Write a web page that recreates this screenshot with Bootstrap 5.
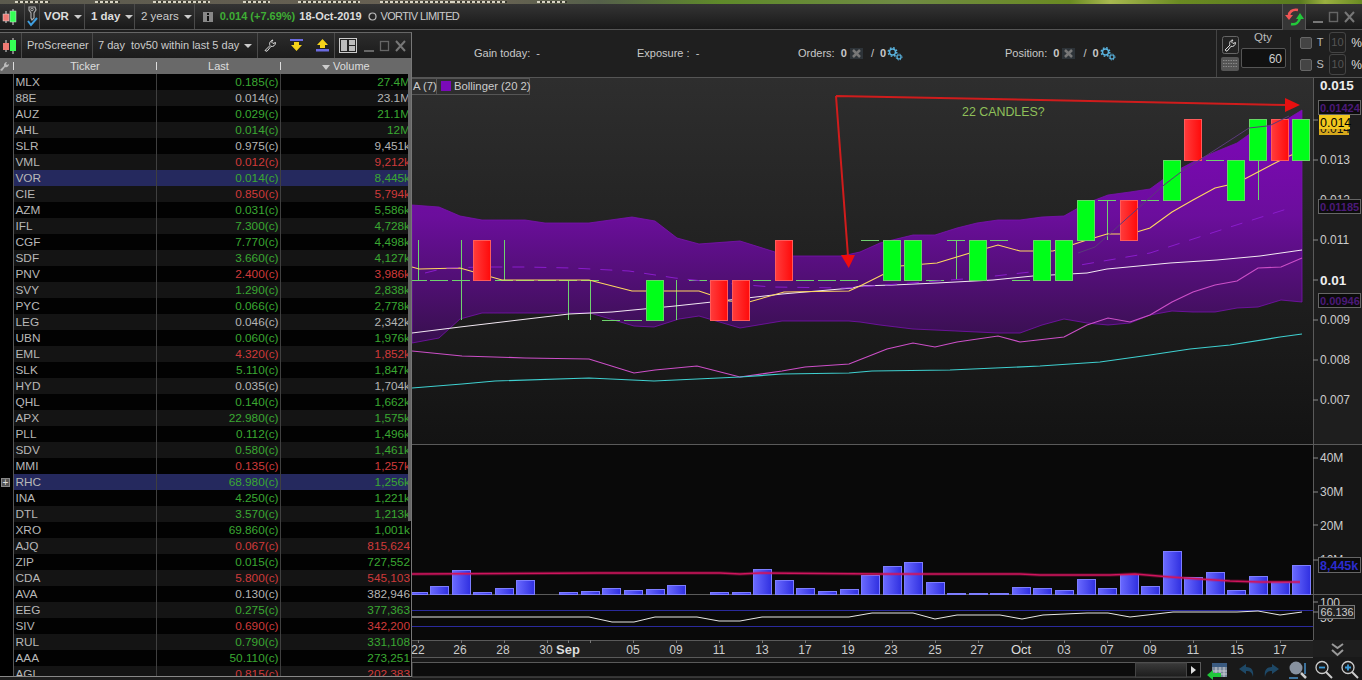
<!DOCTYPE html>
<html lang="en">
<head>
<meta charset="utf-8">
<title>ProRealTime</title>
<link href="https://cdn.jsdelivr.net/npm/bootstrap@5.3.0/dist/css/bootstrap.min.css" rel="stylesheet">
<style>
html,body{height:680px;overflow:hidden;background:#1e1e1e;color:#ccc;font-family:"Liberation Sans",Arial,sans-serif;font-size:11px;line-height:1}
.shell{width:1362px;height:680px}
.topstrip{height:4px;padding-top:1px;background:linear-gradient(90deg,#5b5a4e 0,#6a6254 480px,#55604a 600px,#5f8a2a 720px,#6f8a44 900px,#6a8a22 1070px,#a8b850 1110px,#6a8a22 1180px,#5a7a20 1300px,#9ab040 1325px,#6a8a22 1362px)}
.tfrag{display:block;height:2px;background:repeating-linear-gradient(90deg,#d8d4c4 0 3px,#3a3a30 3px 5px)}
.tf1{width:35px;margin-left:15px}.tf2{width:25px;margin-left:45px}.tf3{width:57px;margin-left:33px}.tf4{width:27px;margin-left:33px}.tf5{width:62px;margin-left:28px}.tf6{width:75px;margin-left:20px}.tf7{width:55px;margin-left:-3px}.tf8{width:30px;margin-left:30px}
.mainbar{height:26px;background:linear-gradient(#343434,#191919);border-bottom:1px solid #555}
.cell{height:25px;border-right:1px solid #4a4a4a;white-space:nowrap}
.mainbar b{color:#ddd;font-size:11.500px}
.c-ico{width:25px;padding-left:1px}.c-anc{width:15px}.c-vor{width:45px;padding-left:4px}.c-day{width:50px;padding-left:6px}.c-yr{width:60px;padding-left:6px;font-size:11.500px}
.caret-d{width:0;height:0;border-left:4px solid transparent;border-right:4px solid transparent;border-top:4px solid #ccc;display:inline-block;margin-left:5px}
.quote{gap:4px;padding-left:8px}
.ptxt{color:#3fae35;font-weight:700;font-size:11px}
.dtxt{color:#ddd;font-weight:700;font-size:11px}
.ntxt{font-size:11px;color:#ccc;letter-spacing:-.6px;margin-left:-1px}
.tab-refresh{width:24px;height:26px;background:#363636;border-left:1px solid #555;border-right:1px solid #555}
.winbtns{width:56px}
.sidepane{width:412px;margin-top:2px;height:645px;background:#000;border-right:1px solid #777;border-top:1px solid #666;border-bottom:1px solid #888}
.sc-title{height:25px;background:linear-gradient(#2c2c2c,#1b1b1b)}
.sc-title .cell{color:#ccc;font-size:11px}
.t-ico{width:22px;padding-left:1px}.t-name{width:71px;padding-left:5px}.t-sel{width:165px;padding-left:5px}.t-tools{width:77px;padding-left:6px;gap:13px}.t-win{gap:6px;padding-left:4px}
.sc-head{height:16px;background:#696969;color:#ddd;font-size:11px}
.hsep{border-left:1px solid #ddd;height:8px}
.hc0{width:3px}.hc1{width:142px}.hc2{width:123px}.hc3{width:130px;padding-left:41px}
.sortd{display:inline-block;border-left:4px solid transparent;border-right:4px solid transparent;border-top:5px solid #ccc;margin-right:3px}
.rowsbox{height:602px;overflow:hidden;position:relative}
.ctable{width:410px;table-layout:fixed;border-collapse:collapse;font-size:11.800px;color:#ccc}
.ctable td{height:16px;padding:0;white-space:nowrap;overflow:hidden;border-right:1px solid #3f3f3f;line-height:16px}
.ctable tr:nth-child(even){background:#141414}
.ctable tr:nth-child(odd){background:#020202}
.ctable tr.sel{background:#25295e}
.ctable td.g0{width:13px;border-right:1px solid #555;background:#000}
.ctable td.c1{width:143px;padding-left:2px;color:#b8b8b8}
.ctable td.c2{width:124px;text-align:right;padding-right:1px}
.ctable td.c3{text-align:right;border-right:0}
.up{color:#3aa832}.dn{color:#cf3a3a}
.ctable td.fl{color:#b4b4b4}
.scrollthumb{position:absolute;right:0;top:0;width:3px;height:447px;background:#666}
.plus{display:inline-block;width:9px;height:9px;margin:3px 1px;background:#555;color:#ddd;font-size:10px;line-height:8px;text-align:center;border:1px solid #888}
.infobar{height:48px;background:#1f1f1f;border-bottom:1px solid #555}
.infotxt{color:#c8c8c8;font-size:11px;white-space:nowrap}
.it1{width:225px;padding-left:62px}.it2{width:161px}.it3{width:207px}.it4{width:211px}
.xb{margin:0 8px 0 3px}.gr{margin-left:1px}.sl{margin-right:3px}
.tradebox{width:146px;height:47px;border-left:1px solid #444;padding-left:3px}
.toolcol{width:24px;gap:3px}
.qtycol{width:50px;text-align:center;align-self:flex-start;padding-top:2px}
.qlab{color:#bbb;font-size:11.500px}
.qtyinp{width:45px;height:20px;background:#111;border:1px solid #555;border-radius:2px;color:#ccc;text-align:right;padding:4px 3px;font-size:12px;margin:4px 0 0 1px}
.pctcol{width:72px;border-left:1px solid #444;height:33px;padding-left:9px;gap:1px;margin-left:4px}
.pctrow{height:22px;gap:5px;color:#bbb}
.chk{width:12px;height:12px;background:#444;border:1px solid #666;border-radius:2px}
.pbox{width:18px;height:21px;border:1px solid #444;border-radius:3px;color:#555;text-align:center;line-height:19px}
.pct{font-size:12px;color:#ddd}
.mainpane{min-width:0}
.bodyrow{min-height:0}
.chartwrap{width:950px;height:602px;display:block}
svg text{font-family:"Liberation Sans",Arial,sans-serif}
.ax{fill:#ccc;font-size:12px}
.axb{fill:#eee;font-size:13.500px;font-weight:700}
.dt{fill:#ccc;font-size:12px}
.dtb{fill:#ddd;font-size:13px;font-weight:700}
.dto{fill:#ddd;font-size:13px}
</style>
</head>
<body>
<div class="shell d-flex flex-column">
  <div class="topstrip d-flex"><i class="tfrag tf1"></i><i class="tfrag tf2"></i><i class="tfrag tf3"></i><i class="tfrag tf4"></i><i class="tfrag tf5"></i><i class="tfrag tf6"></i><i class="tfrag tf7"></i><i class="tfrag tf8"></i></div>
  <div class="mainbar d-flex align-items-stretch">
    <div class="cell c-ico d-flex align-items-center">
      <svg width="16" height="18" viewBox="0 0 16 18"><path d="M5 3v12M12 1v16" stroke="#ddd"/><rect x="2" y="6" width="6" height="7" fill="#ef7a74" stroke="#ddd" stroke-width=".5"/><rect x="9" y="3" width="6" height="11" fill="#35ff55" stroke="#ddd" stroke-width=".5"/></svg>
    </div>
    <div class="cell c-anc d-flex align-items-center justify-content-center">
      <svg width="13" height="21" viewBox="0 0 13 21"><path d="M3 1h6l1 3-2 3v5l-2 2-1-2V7L3 4z" fill="none" stroke="#aaa" stroke-width="1.200"/><circle cx="6" cy="3.500" r="1.300" fill="none" stroke="#aaa"/><path d="M2 15l3 4 6-7" fill="none" stroke="#3f9fe0" stroke-width="2"/></svg>
    </div>
    <div class="cell c-vor d-flex align-items-center"><b>VOR</b><span class="caret-d"></span></div>
    <div class="cell c-day d-flex align-items-center"><b>1 day</b><span class="caret-d"></span></div>
    <div class="cell c-yr d-flex align-items-center">2 years<span class="caret-d"></span></div>
    <div class="quote d-flex align-items-center flex-grow-1">
      <svg width="10" height="10" viewBox="0 0 10 10"><rect width="10" height="10" fill="#888"/><rect x="4" y="1" width="2" height="2" fill="#111"/><rect x="4" y="4" width="2" height="5" fill="#111"/></svg>
      <span class="ptxt ms-1">0.014 (+7.69%)</span><span class="dtxt">18-Oct-2019</span>
      <svg width="9" height="9" class="ms-1" viewBox="0 0 9 9"><circle cx="4.500" cy="4.500" r="3.500" fill="none" stroke="#bbb" stroke-width="1.200"/></svg>
      <span class="ntxt">VORTIV LIMITED</span>
    </div>
    <div class="tab-refresh d-flex align-items-center justify-content-center">
      <svg width="20" height="20" viewBox="0 0 20 20"><path d="M14 3C8 2 5 5 5 9" fill="none" stroke="#f05555" stroke-width="2.600"/><path d="M1 8h8l-4 5z" fill="#f05555"/><path d="M7 17c5 1 8-2 9-6" fill="none" stroke="#22c83a" stroke-width="2.600"/><path d="M12 12h8l-4-6z" fill="#22c83a"/></svg>
    </div>
    <div class="winbtns d-flex align-items-center justify-content-center">
      <svg width="44" height="12" viewBox="0 0 44 12"><path d="M1 11h10" stroke="#777" stroke-width="2"/><rect x="17.500" y="1.500" width="8" height="9" fill="none" stroke="#666" stroke-width="1.400"/><path d="M33 1l9 10M42 1l-9 10" stroke="#777" stroke-width="2"/></svg>
    </div>
  </div>
  <div class="bodyrow d-flex flex-grow-1">
    <div class="sidepane flex-shrink-0">
      <div class="sc-title d-flex align-items-stretch">
        <div class="cell t-ico d-flex align-items-center"><svg width="16" height="18" viewBox="0 0 16 18"><path d="M5 3v12M12 1v16" stroke="#ddd"/><rect x="2" y="6" width="6" height="7" fill="#ef7a74"/><rect x="9" y="3" width="6" height="11" fill="#35ff55"/></svg></div>
        <div class="cell t-name d-flex align-items-center">ProScreener</div>
        <div class="cell t-sel d-flex align-items-center">7 day&nbsp; tov50 within last 5 day<span class="caret-d"></span></div>
        <div class="cell t-tools d-flex align-items-center">
          <svg width="13" height="13" viewBox="0 0 13 13"><path d="M1 11.500l5-5c-1-2 0-5 3-5.500l-1.500 2 1.500 1.500 2.500-1c0 3-2.500 4.500-4.500 3.800l-4 5z" fill="none" stroke="#ddd"/></svg>
          <svg width="13" height="13" viewBox="0 0 13 13"><rect y="0" width="13" height="2" fill="#6a6ae0"/><path d="M4 3h5v3h3l-5.500 6L1 6h3z" fill="#f5d21a"/></svg>
          <svg width="13" height="13" viewBox="0 0 13 13"><path d="M4 9h5V6h3L6.500 0 1 6h3z" fill="#f5d21a"/><rect y="10" width="13" height="2.500" fill="#6a6ae0"/></svg>
        </div>
        <div class="t-win d-flex align-items-center">
          <svg width="18" height="15" viewBox="0 0 18 15"><rect x=".5" y=".5" width="17" height="14" fill="#222" stroke="#ccc"/><rect x="2" y="2" width="6" height="11" fill="#bbb"/><rect x="10" y="2" width="6" height="5" fill="#bbb"/><rect x="10" y="8" width="6" height="5" fill="#bbb"/></svg>
          <svg width="44" height="12" viewBox="0 0 44 12"><path d="M1 11h10" stroke="#666" stroke-width="2"/><rect x="17.500" y="1.500" width="8" height="9" fill="none" stroke="#666" stroke-width="1.300"/><path d="M33 1l9 10M42 1l-9 10" stroke="#777" stroke-width="2"/></svg>
        </div>
      </div>
      <div class="sc-head d-flex align-items-center">
        <svg width="10" height="11" viewBox="0 0 10 11"><path d="M0 9l4-4c-.5-2 1-4 3-4L6 3l1 1 2-1c0 2-2 4-4 3l-3 4z" fill="#bbb"/></svg>
        <span class="hc0"></span><span class="hsep"></span>
        <span class="hc1 text-center">Ticker</span><span class="hsep"></span>
        <span class="hc2 text-center">Last</span><span class="hsep"></span>
        <span class="hc3"><span class="sortd"></span>Volume</span>
      </div>
      <div class="rowsbox">
        <table class="ctable"><tbody>
<tr><td class="g0"></td><td class="c1">MLX</td><td class="c2 up">0.185(c)</td><td class="c3 up">27.4M</td></tr>
<tr><td class="g0"></td><td class="c1">88E</td><td class="c2 fl">0.014(c)</td><td class="c3 fl">23.1M</td></tr>
<tr><td class="g0"></td><td class="c1">AUZ</td><td class="c2 up">0.029(c)</td><td class="c3 up">21.1M</td></tr>
<tr><td class="g0"></td><td class="c1">AHL</td><td class="c2 up">0.014(c)</td><td class="c3 up">12M</td></tr>
<tr><td class="g0"></td><td class="c1">SLR</td><td class="c2 fl">0.975(c)</td><td class="c3 fl">9,451k</td></tr>
<tr><td class="g0"></td><td class="c1">VML</td><td class="c2 dn">0.012(c)</td><td class="c3 dn">9,212k</td></tr>
<tr class="sel"><td class="g0"></td><td class="c1">VOR</td><td class="c2 up">0.014(c)</td><td class="c3 up">8,445k</td></tr>
<tr><td class="g0"></td><td class="c1">CIE</td><td class="c2 dn">0.850(c)</td><td class="c3 dn">5,794k</td></tr>
<tr><td class="g0"></td><td class="c1">AZM</td><td class="c2 up">0.031(c)</td><td class="c3 up">5,586k</td></tr>
<tr><td class="g0"></td><td class="c1">IFL</td><td class="c2 up">7.300(c)</td><td class="c3 up">4,728k</td></tr>
<tr><td class="g0"></td><td class="c1">CGF</td><td class="c2 up">7.770(c)</td><td class="c3 up">4,498k</td></tr>
<tr><td class="g0"></td><td class="c1">SDF</td><td class="c2 up">3.660(c)</td><td class="c3 up">4,127k</td></tr>
<tr><td class="g0"></td><td class="c1">PNV</td><td class="c2 dn">2.400(c)</td><td class="c3 dn">3,986k</td></tr>
<tr><td class="g0"></td><td class="c1">SVY</td><td class="c2 up">1.290(c)</td><td class="c3 up">2,838k</td></tr>
<tr><td class="g0"></td><td class="c1">PYC</td><td class="c2 up">0.066(c)</td><td class="c3 up">2,778k</td></tr>
<tr><td class="g0"></td><td class="c1">LEG</td><td class="c2 fl">0.046(c)</td><td class="c3 fl">2,342k</td></tr>
<tr><td class="g0"></td><td class="c1">UBN</td><td class="c2 up">0.060(c)</td><td class="c3 up">1,976k</td></tr>
<tr><td class="g0"></td><td class="c1">EML</td><td class="c2 dn">4.320(c)</td><td class="c3 dn">1,852k</td></tr>
<tr><td class="g0"></td><td class="c1">SLK</td><td class="c2 up">5.110(c)</td><td class="c3 up">1,847k</td></tr>
<tr><td class="g0"></td><td class="c1">HYD</td><td class="c2 fl">0.035(c)</td><td class="c3 fl">1,704k</td></tr>
<tr><td class="g0"></td><td class="c1">QHL</td><td class="c2 up">0.140(c)</td><td class="c3 up">1,662k</td></tr>
<tr><td class="g0"></td><td class="c1">APX</td><td class="c2 up">22.980(c)</td><td class="c3 up">1,575k</td></tr>
<tr><td class="g0"></td><td class="c1">PLL</td><td class="c2 up">0.112(c)</td><td class="c3 up">1,496k</td></tr>
<tr><td class="g0"></td><td class="c1">SDV</td><td class="c2 up">0.580(c)</td><td class="c3 up">1,461k</td></tr>
<tr><td class="g0"></td><td class="c1">MMI</td><td class="c2 dn">0.135(c)</td><td class="c3 dn">1,257k</td></tr>
<tr class="sel"><td class="g0"><span class="plus">+</span></td><td class="c1">RHC</td><td class="c2 up">68.980(c)</td><td class="c3 up">1,256k</td></tr>
<tr><td class="g0"></td><td class="c1">INA</td><td class="c2 up">4.250(c)</td><td class="c3 up">1,221k</td></tr>
<tr><td class="g0"></td><td class="c1">DTL</td><td class="c2 up">3.570(c)</td><td class="c3 up">1,213k</td></tr>
<tr><td class="g0"></td><td class="c1">XRO</td><td class="c2 up">69.860(c)</td><td class="c3 up">1,001k</td></tr>
<tr><td class="g0"></td><td class="c1">AJQ</td><td class="c2 dn">0.067(c)</td><td class="c3 dn">815,624</td></tr>
<tr><td class="g0"></td><td class="c1">ZIP</td><td class="c2 up">0.015(c)</td><td class="c3 up">727,552</td></tr>
<tr><td class="g0"></td><td class="c1">CDA</td><td class="c2 dn">5.800(c)</td><td class="c3 dn">545,103</td></tr>
<tr><td class="g0"></td><td class="c1">AVA</td><td class="c2 fl">0.130(c)</td><td class="c3 fl">382,946</td></tr>
<tr><td class="g0"></td><td class="c1">EEG</td><td class="c2 up">0.275(c)</td><td class="c3 up">377,363</td></tr>
<tr><td class="g0"></td><td class="c1">SIV</td><td class="c2 dn">0.690(c)</td><td class="c3 dn">342,200</td></tr>
<tr><td class="g0"></td><td class="c1">RUL</td><td class="c2 up">0.790(c)</td><td class="c3 up">331,108</td></tr>
<tr><td class="g0"></td><td class="c1">AAA</td><td class="c2 up">50.110(c)</td><td class="c3 up">273,251</td></tr>
<tr><td class="g0"></td><td class="c1">AGL</td><td class="c2 dn">0.815(c)</td><td class="c3 dn">202,383</td></tr>
        </tbody></table>
        <div class="scrollthumb"></div>
      </div>
    </div>
    <div class="mainpane flex-grow-1 d-flex flex-column">
      <div class="infobar d-flex align-items-center">
        <div class="infotxt it1">Gain today:&nbsp; -</div>
        <div class="infotxt it2">Exposure :&nbsp; -</div>
        <div class="infotxt it3 d-flex align-items-center">Orders:&nbsp;&nbsp;<b>0</b><svg class="xb" width="13" height="11" viewBox="0 0 13 11"><rect width="13" height="11" fill="#2d3338"/><path d="M3 2l7 7M10 2l-7 7" stroke="#777" stroke-width="2.500"/></svg><span class="sl">/</span>&nbsp;<b>0</b><svg class="gr" width="16" height="14" viewBox="0 0 16 14"><circle cx="5.500" cy="5" r="3" fill="none" stroke="#5ab4e0" stroke-width="1.400"/><circle cx="5.500" cy="5" r="4.300" fill="none" stroke="#5ab4e0" stroke-width="1.400" stroke-dasharray="1.700 1.700"/><circle cx="12" cy="10" r="2" fill="none" stroke="#5ab4e0" stroke-width="1.200"/><circle cx="12" cy="10" r="3" fill="none" stroke="#5ab4e0" stroke-width="1" stroke-dasharray="1.200 1.200"/></svg></div>
        <div class="infotxt it4 d-flex align-items-center">Position:&nbsp;&nbsp;<b>0</b><svg class="xb" width="13" height="11" viewBox="0 0 13 11"><rect width="13" height="11" fill="#2d3338"/><path d="M3 2l7 7M10 2l-7 7" stroke="#777" stroke-width="2.500"/></svg><span class="sl">/</span>&nbsp;<b>0</b><svg class="gr" width="16" height="14" viewBox="0 0 16 14"><circle cx="5.500" cy="5" r="3" fill="none" stroke="#5ab4e0" stroke-width="1.400"/><circle cx="5.500" cy="5" r="4.300" fill="none" stroke="#5ab4e0" stroke-width="1.400" stroke-dasharray="1.700 1.700"/><circle cx="12" cy="10" r="2" fill="none" stroke="#5ab4e0" stroke-width="1.200"/><circle cx="12" cy="10" r="3" fill="none" stroke="#5ab4e0" stroke-width="1" stroke-dasharray="1.200 1.200"/></svg></div>
        <div class="tradebox d-flex align-items-center ms-auto">
          <div class="toolcol d-flex flex-column align-items-center">
            <svg width="17" height="18" viewBox="0 0 17 18"><rect x=".5" y=".5" width="16" height="17" rx="2" fill="#222" stroke="#666"/><path d="M3 14l5-5c-1-2 0-5 3-5l-1.500 2 1.500 1.500 2.500-1c0 3-2.500 4.500-4.500 3.800l-4 5z" fill="none" stroke="#ddd"/></svg>
            <svg width="18" height="14" viewBox="0 0 18 14"><rect width="18" height="14" rx="2" fill="#555"/><path d="M2 3.500h14M2 6.500h14M2 9.500h14" stroke="#888" stroke-dasharray="1.500 1"/></svg>
          </div>
          <div class="qtycol"><div class="qlab">Qty</div><div class="qtyinp">60</div></div>
          <div class="pctcol d-flex flex-column justify-content-center">
            <div class="pctrow d-flex align-items-center"><span class="chk"></span><span>T</span><span class="pbox">10</span><span class="pct">%</span></div>
            <div class="pctrow d-flex align-items-center"><span class="chk"></span><span>S</span><span class="pbox">10</span><span class="pct">%</span></div>
          </div>
        </div>
      </div>
      <svg id="chart" class="chartwrap" viewBox="412 78 950 602" xmlns="http://www.w3.org/2000/svg">
        <defs>
          <linearGradient id="bgG" x1="0" y1="0" x2="0" y2="1"><stop offset="0" stop-color="#2e2e2e"/><stop offset="1" stop-color="#131313"/></linearGradient>
          <linearGradient id="bb" gradientUnits="userSpaceOnUse" x1="0" y1="110" x2="0" y2="345"><stop offset="0" stop-color="#8006bc"/><stop offset=".45" stop-color="#6b0e9c"/><stop offset="1" stop-color="#36104c"/></linearGradient>
          <linearGradient id="rd" x1="0" y1="0" x2="1" y2="0"><stop offset="0" stop-color="#ff3c3c"/><stop offset="1" stop-color="#ff0a0a"/></linearGradient>
          <linearGradient id="vb" x1="0" y1="0" x2="1" y2="0"><stop offset="0" stop-color="#6a6aff"/><stop offset="1" stop-color="#2f2fe0"/></linearGradient>
          <linearGradient id="thumb" x1="0" y1="0" x2="0" y2="1"><stop offset="0" stop-color="#3a3a3a"/><stop offset="1" stop-color="#1c1c1c"/></linearGradient>
        </defs>
        <!-- panes -->
        <rect x="412" y="78" width="950" height="602" fill="#1e1e1e"/>
        <rect x="412" y="78" width="901" height="366" fill="url(#bgG)"/>
        <rect x="412" y="444" width="901" height="196" fill="#090909"/>
        <rect x="1313" y="444" width="49" height="196" fill="#161616"/>
        <rect x="412" y="657" width="950" height="23" fill="#191919"/>
        <path d="M412 77.500H1313.500V640M412 444.500H1362M412 594.500H1362M412 640.500H1313M412 657.500H1313" stroke="#5a5a5a" fill="none"/>
        <!-- legend -->
        <rect x="411.500" y="78.500" width="25" height="16" fill="#2e2e2e" stroke="#555"/>
        <rect x="436.500" y="78.500" width="93" height="16" fill="#2e2e2e" stroke="#555"/>
        <text x="413" y="90" fill="#ccc" font-size="11.300">A (7)</text>
        <rect x="441" y="81" width="10" height="10" fill="#7a0ab8"/>
        <text x="454" y="90" fill="#ccc" font-size="11.300">Bollinger (20 2)</text>
        <!-- bollinger -->
        <polygon fill="url(#bb)" stroke="#7a12b0" stroke-width=".8" points="412,205 439,207 460,216 482,220 525,220 545,223 589,223 632,217 655,221 677,238 699,244 740,241 775,252 792,256 842,256 860,252 880,243 913,235 935,235 957,228 977,223 998,220 1020,220 1042,217 1064,216 1087,203 1108,195 1130,192 1150,189 1172,173 1193,162 1215,152 1237,143 1258,128 1281,123 1302,110 1302,302 1281,300 1258,307 1237,308 1215,312 1193,312 1172,311 1150,315 1130,323 1108,325 1087,323 1064,319 1042,325 1020,333 998,333 935,330 913,329 880,325 860,322 849,321 782,321 740,328 699,316 679,319 654,327 634,326 590,313 482,313 460,319 439,338 412,343"/>
        <g id="sticks"></g>
        <polyline fill="none" stroke="#f2e8f2" stroke-width="1" points="412,333 460,327 502,322 569,314 612,312 675,306 712,302 782,294 852,288 860,286 893,285 937,283 993,280 1033,276 1087,273 1107,269 1170,263 1217,260 1260,256 1302,250"/>
        <polyline fill="none" stroke="#ffd860" stroke-width="1.100" points="412,267 419,269 460,268 502,280 589,280 632,291 699,291 729,301 749,302 784,292 849,291 860,286 900,266 937,263 970,253 998,245 1020,251 1053,251 1087,240 1107,234 1130,234 1150,228 1172,212 1193,200 1215,188 1237,183 1258,172 1281,160 1302,150"/>
        <polyline fill="none" stroke="#8a1ccc" stroke-width="1" stroke-dasharray="12 10" points="425,273 445,268 484,267 525,267 572,268 629,271 675,278 722,283 772,287 845,288 977,278 1057,269 1150,253 1227,228 1290,208"/>
        <polyline fill="none" stroke="#cc4fc8" stroke-width="1.200" points="412,351 462,356 525,358 589,359 634,373 655,370 697,366 740,377 782,371 805,367 849,364 887,349 913,343 935,347 957,342 998,336 1020,342 1064,337 1087,325 1108,318 1130,322 1150,315 1172,302 1193,292 1215,285 1237,281 1258,268 1281,267 1302,258"/>
        <polyline fill="none" stroke="#3fd0d0" stroke-width="1.200" points="412,388 462,384 495,381 589,378 654,381 740,377 782,374 849,373 872,371 950,370 1040,366 1100,362 1150,355 1190,349 1230,345 1280,337 1302,334"/>
        <g id="candles"></g>
        <polyline fill="none" stroke="#5a3a7a" stroke-width="1" points="1078,253 1095,247 1164,185 1181,172 1249,128 1267,126 1271,125 1289,116"/>
        <!-- arrows -->
        <path d="M836 96L1288 105M836 96L848 256" stroke="#d01c1c" stroke-width="2" fill="none"/>
        <path d="M1300 105L1285 98V112z" fill="#e81010"/>
        <path d="M848.700 268L841 255H855z" fill="#f00d0d"/>
        <text x="962" y="116" fill="#8fc05a" font-size="12.400">22 CANDLES?</text>
        <!-- price axis -->
        <path d="M1313 120h5M1313 160h5M1313 240h5M1313 280h5M1313 320h5M1313 360h5M1313 400h5M1313 458h5M1313 492h5M1313 525h5M1313 560h5M1313 602h5M1313 612h5" stroke="#888"/>
        <text x="1320" y="90" class="axb">0.015</text>
        <text x="1320" y="164" class="ax">0.013</text>
        <text x="1320" y="204" class="ax">0.012</text>
        <text x="1320" y="244" class="ax">0.011</text>
        <text x="1320" y="285" class="axb">0.01</text>
        <text x="1320" y="324" class="ax">0.009</text>
        <text x="1320" y="364" class="ax">0.008</text>
        <text x="1320" y="404" class="ax">0.007</text>
        <text x="1320" y="462" class="ax">40M</text>
        <text x="1320" y="496" class="ax">30M</text>
        <text x="1320" y="530" class="ax">20M</text>
        <text x="1320" y="564" class="ax">10M</text>
        <text x="1320" y="607" class="ax">100</text>
        <text x="1320" y="622" class="ax">50</text>
        <rect x="1319" y="119" width="30" height="16" fill="#d6a81c"/><text x="1320" y="133" fill="#111" font-size="12">0.014</text>
        <rect x="1319" y="115" width="31" height="14" fill="#f2c81f"/><text x="1320" y="126.500" fill="#000" font-size="12.500">0.014</text>
        <rect x="1318.500" y="100.500" width="42" height="14" fill="#0b0b0b" stroke="#666"/><text x="1320" y="112" fill="#4b1a78" font-size="11" font-weight="700">0.01424</text>
        <rect x="1318.500" y="199.500" width="42" height="14" fill="#0b0b0b" stroke="#666"/><text x="1320" y="211" fill="#4b1a78" font-size="11" font-weight="700">0.01185</text>
        <rect x="1318.500" y="293.500" width="42" height="14" fill="#0b0b0b" stroke="#666"/><text x="1320" y="305" fill="#4b1a78" font-size="11" font-weight="700">0.00946</text>
        <rect x="1318.500" y="557.500" width="42" height="15" fill="#0b0b0b" stroke="#666"/><text x="1320" y="569.500" fill="#2b2bd0" font-size="12.500" font-weight="700">8,445k</text>
        <rect x="1318.500" y="605.500" width="36" height="13" fill="#222" stroke="#777"/><text x="1320.500" y="616" fill="#ccc" font-size="10.800">66.136</text>
        <!-- volume -->
        <g id="vols"></g>
        <polyline fill="none" stroke="#d0145e" stroke-width="3.500" stroke-opacity=".3" points="412,574 600,573 720,573 740,574 760,573 880,574 1020,574 1040,575 1110,575 1135,574 1170,577 1200,579 1230,581 1260,582 1300,582"/>
        <polyline fill="none" stroke="#d0145e" stroke-width="1.600" points="412,574 600,573 720,573 740,574 760,573 880,574 1020,574 1040,575 1110,575 1135,574 1170,577 1200,579 1230,581 1260,582 1300,582"/>
        <path d="M412 610.500H1313M412 626.500H1313" stroke="#2a2a9c"/>
        <polyline fill="none" stroke="#e6e6e6" stroke-width="1" points="412,617 589,617 612,622 634,622 655,617 697,617 719,621 740,621 762,617 849,617 872,613 913,613 935,619 957,615 1000,615 1022,619 1043,615 1087,613 1108,613 1130,617 1173,612 1237,612 1258,611 1280,615 1302,612"/>
        <!-- date axis -->
        <rect x="412" y="641" width="901" height="16" fill="#202020"/>
        <g id="ticks"></g>
        <g text-anchor="middle">
        <text x="418" y="654" class="dt">22</text><text x="460" y="654" class="dt">26</text><text x="503" y="654" class="dt">28</text><text x="546" y="654" class="dt">30</text>
        <text x="568" y="654" class="dtb">Sep</text><text x="633" y="654" class="dt">05</text><text x="676" y="654" class="dt">09</text><text x="719" y="654" class="dt">11</text><text x="762" y="654" class="dt">13</text><text x="805" y="654" class="dt">17</text><text x="848" y="654" class="dt">19</text><text x="891" y="654" class="dt">23</text><text x="935" y="654" class="dt">25</text><text x="977" y="654" class="dt">27</text>
        <text x="1021" y="654" class="dto">Oct</text><text x="1064" y="654" class="dt">03</text><text x="1107" y="654" class="dt">07</text><text x="1150" y="654" class="dt">09</text><text x="1193" y="654" class="dt">11</text><text x="1237" y="654" class="dt">15</text><text x="1280" y="654" class="dt">17</text>
        </g>
        <!-- scrollbar -->
        <rect x="412" y="662.500" width="788.500" height="14.500" fill="#0c0c0c" stroke="#5a5a5a"/>
        <rect x="1135.500" y="663" width="51" height="14" fill="url(#thumb)" stroke="#444"/>
        <path d="M1191 666l5 4-5 4z" fill="#ddd"/>
        <!-- bottom-right icons -->
        <path d="M1332 644l5.500 4 5.500-4M1332 650l5.500 5 5.500-5" stroke="#999" stroke-width="2" fill="none"/>
        <rect x="1212" y="663" width="15" height="14" fill="#7c8a9c"/><rect x="1212" y="663" width="15" height="4" fill="#3a5a80"/><path d="M1212 671h15M1212 674h15M1216 667v10M1220 667v10M1224 667v10" stroke="#c8ccd4"/>
        <path d="M1207 675l6-5v3h8v4h-8v3z" fill="#1fc83a"/>
        <path d="M1246 664l-7 5 7 5v-3c4 0 6 1 7 6 1-6-1-10-7-10z" fill="#1e4866"/>
        <path d="M1272 664l7 5-7 5v-3c-4 0-6 1-7 6-1-6 1-10 7-10z" fill="#1e4866"/>
        <circle cx="1296" cy="668" r="6.500" fill="#8892a0"/><path d="M1301 673l5 5" stroke="#ccc" stroke-width="2.500"/><path d="M1305 663v11M1289 678h9" stroke="#4a90c8" stroke-width="1.500"/>
        <circle cx="1322" cy="667.500" r="6" fill="none" stroke="#ccc" stroke-width="1.300"/><path d="M1319 667.500h6" stroke="#3a9ad8" stroke-width="1.800"/><path d="M1326 672l6 6" stroke="#ccc" stroke-width="2"/>
        <circle cx="1348" cy="667.500" r="6" fill="none" stroke="#ccc" stroke-width="1.300"/><path d="M1345 667.500h6M1348 664.500v6" stroke="#3a9ad8" stroke-width="1.800"/><path d="M1352 672l6 6" stroke="#ccc" stroke-width="2"/>
      </svg>
    </div>
  </div>
</div>
<script>
(function(){
var NS='http://www.w3.org/2000/svg';
function el(p,n,a){var e=document.createElementNS(NS,n);for(var k in a)e.setAttribute(k,a[k]);p.appendChild(e);return e}
function cx(i){return Math.round(417.5+21.55*i)}
var st=document.getElementById('sticks'),ca=document.getElementById('candles'),vo=document.getElementById('vols'),ti=document.getElementById('ticks');
var G='#6fd26f';
[[0,240,280],[2,240,320],[4,240,280],[7,280,320],[8,280,320],[12,280,320],[25,240,280],[32,200,240],[39,160,200]].forEach(function(s){
  el(st,'path',{d:'M'+(cx(s[0])+.5)+' '+s[1]+'V'+s[2],stroke:G,fill:'none'});
});
[[0,280],[1,280],[2,280],[4,280],[5,280],[6,280],[7,280],[8,280],[9,320],[10,320],[13,280],[16,280],[18,280],[19,280],[20,280],[21,240],[24,280],[25,240],[27,240],[28,280],[32,200],[34,200],[37,160]].forEach(function(d){
  el(st,'path',{d:'M'+(cx(d[0])-9)+' '+(d[1]+.5)+'h18',stroke:G,fill:'none'});
});
[[3,240,280,0],[11,280,320,1],[14,280,320,0],[15,280,320,0],[17,240,280,0],[22,240,280,1],[23,240,280,1],[26,240,280,1],[29,240,280,1],[30,240,280,1],[31,200,240,1],[33,200,240,0],[35,160,200,1],[36,119,160,0],[38,160,200,1],[39,119,160,1],[40,119,160,0],[41,119,160,1]].forEach(function(c){
  el(ca,'rect',{x:cx(c[0])-9+.5,y:c[1]+.5,width:17,height:c[2]-c[1],fill:c[3]?'#00ff19':'url(#rd)',stroke:c[3]?'#66d866':'#ff5a5a'});
});
[592,586,570,592,588,580,null,592,591,588,590,589,585,null,592,592,569,580,588,591,589,575,566,562,582,593,593,593,587,588,590,579,588,574,586,551,577,572,590,576,582,565].forEach(function(t,i){
  if(t===null)return;
  el(vo,'rect',{x:cx(i)-9+.5,y:t+.5,width:18,height:594-t,fill:'url(#vb)',stroke:'#7d7dff','stroke-width':1});
});
[0,2,4,6,7,8,10,12,14,16,18,20,22,24,26,28,30,32,34,36,38,40].forEach(function(i){
  el(ti,'path',{d:'M'+(cx(i)+.5)+' 640v3',stroke:'#777'});
});
})();
</script>
</body>
</html>
